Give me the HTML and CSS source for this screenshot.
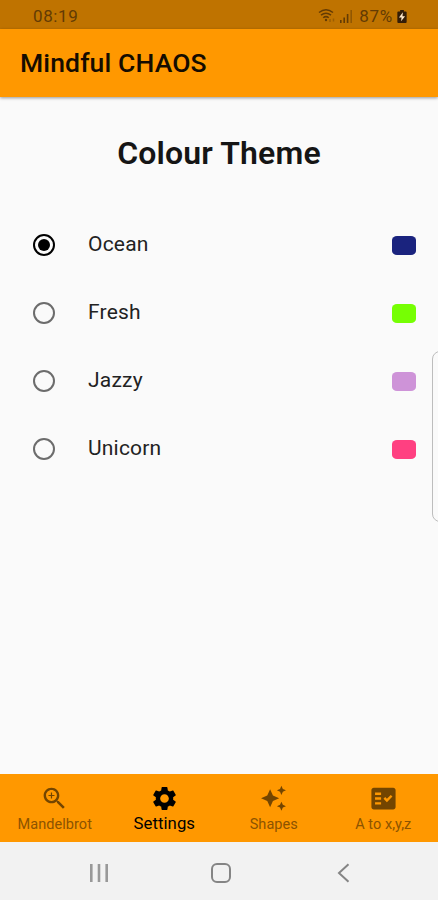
FILE: index.html
```html
<!DOCTYPE html>
<html lang="en">
<head>
<meta charset="utf-8">
<title>Mindful CHAOS</title>
<link rel="stylesheet" href="styles.css">
</head>
<body>
<header class="status">
  <span class="clock">08:19</span>
  <div class="status-right">
    <svg class="wifi" viewBox="0 0 19 16" fill="none" stroke="currentColor" stroke-width="1.5">
      <path d="M1 4.500Q8 -1 15 4.500M3 7.200Q8 3.200 13 7.200M5.200 9.800Q8 7.400 10.800 9.800"/>
      <circle cx="8" cy="12" r="1.200" fill="currentColor" stroke="none"/>
      <path d="M12 14v-3M15.500 10.500v3" opacity=".4"/>
    </svg>
    <svg class="signal" viewBox="0 0 13 14" fill="currentColor">
      <path d="M0 11h1.600v3H0zM3.400 8.500H5V14H3.400zM6.800 5h1.600v9H6.800z"/><path d="M10.400 1H12v13h-1.600z" opacity=".5"/>
    </svg>
    <span class="percent">87%</span>
    <svg class="battery" viewBox="0 0 10 14">
      <path fill="#331d08" d="M3 0h4v1.500h2q1 0 1 1V13q0 1-1 1H1q-1 0-1-1V2.500q0-1 1-1h2z"/>
      <path fill="#ffe9cc" d="M6 2.500L1.700 8H4.500L4 12 8.300 6.700H5.500z"/>
    </svg>
  </div>
</header>
<div class="appbar"><h1>Mindful CHAOS</h1></div>
<main>
  <h2>Colour Theme</h2>
  <ul class="themes">
    <li><span class="radio checked"></span><span class="name">Ocean</span><span class="swatch ocean"></span></li>
    <li><span class="radio"></span><span class="name">Fresh</span><span class="swatch fresh"></span></li>
    <li><span class="radio"></span><span class="name">Jazzy</span><span class="swatch jazzy"></span></li>
    <li><span class="radio"></span><span class="name">Unicorn</span><span class="swatch unicorn"></span></li>
  </ul>
  <div class="edge-handle"></div>
</main>
<nav class="tabs">
  <a class="tab">
    <svg viewBox="0 0 24 24"><path d="M15.500 14h-.79l-.28-.27C15.410 12.590 16 11.110 16 9.500 16 5.910 13.090 3 9.500 3S3 5.910 3 9.500 5.910 16 9.500 16c1.610 0 3.090-.59 4.230-1.570l.27.28v.79l5 4.990L20.490 19l-4.990-5zm-6 0C7.010 14 5 11.990 5 9.500S7.010 5 9.500 5 14 7.010 14 9.500 11.990 14 9.500 14zM12 10h-2v2H9v-2H7V9h2V7h1v2h2v1z"/></svg>
    <span>Mandelbrot</span>
  </a>
  <a class="tab active">
    <svg viewBox="0 0 24 24"><path d="M19.140 12.940c.04-.3.060-.61.060-.94 0-.32-.02-.64-.07-.94l2.030-1.580c.18-.14.23-.41.120-.61l-1.920-3.320c-.12-.22-.37-.29-.59-.22l-2.390.96c-.5-.38-1.030-.7-1.620-.94l-.36-2.540c-.04-.24-.24-.41-.48-.41h-3.840c-.24 0-.43.17-.47.41l-.36 2.540c-.59.24-1.130.57-1.620.94l-2.390-.96c-.22-.08-.47 0-.59.22L2.740 8.870c-.12.21-.08.47.12.61l2.030 1.580c-.05.3-.09.63-.09.94s.02.64.07.94l-2.030 1.580c-.18.14-.23.41-.12.61l1.920 3.320c.12.22.37.29.59.22l2.390-.96c.5.38 1.030.7 1.620.94l.36 2.540c.05.24.24.41.48.41h3.840c.24 0 .44-.17.47-.41l.36-2.540c.59-.24 1.130-.56 1.620-.94l2.390.96c.22.08.47 0 .59-.22l1.920-3.320c.12-.22.07-.47-.12-.61l-2.010-1.580zM12 15.600c-1.980 0-3.600-1.620-3.600-3.600s1.620-3.600 3.600-3.600 3.600 1.620 3.600 3.600-1.620 3.600-3.600 3.600z"/></svg>
    <span>Settings</span>
  </a>
  <a class="tab">
    <svg viewBox="-.8 -.6 25.600 25.600"><path d="M19 9l1.250-2.750L23 5l-2.750-1.250L19 1l-1.250 2.750L15 5l2.750 1.250L19 9zm-7.500.5L9 4 6.500 9.500 1 12l5.500 2.500L9 20l2.500-5.500L17 12l-5.500-2.500zM19 15l-1.250 2.750L15 19l2.750 1.250L19 23l1.250-2.750L23 19l-2.750-1.250L19 15z"/></svg>
    <span>Shapes</span>
  </a>
  <a class="tab">
    <svg viewBox="0 0 24 24"><path fill-rule="evenodd" d="M20 3H4c-1.100 0-2 .9-2 2v14c0 1.100.9 2 2 2h16c1.100 0 2-.9 2-2V5c0-1.100-.9-2-2-2zM10 17H5v-2h5v2zm0-4H5v-2h5v2zm0-4H5V7h5v2zm4.820 6L12 12.160l1.410-1.410 1.410 1.420L17.990 9l1.420 1.420L14.820 15z"/></svg>
    <span>A to x,y,z</span>
  </a>
</nav>
<footer class="sysnav">
  <svg class="recents" viewBox="0 0 20 20"><path d="M2.300 1v18M10 1v18M17.700 1v18"/></svg>
  <svg viewBox="0 0 20 20"><rect x="1" y="1" width="18" height="18" rx="5"/></svg>
  <svg viewBox="0 0 20 20"><path d="M14.500 1.200L5 10l9.500 8.800"/></svg>
</footer>
</body>
</html>
```

FILE: styles.css
```css
* { box-sizing: border-box; margin: 0; padding: 0; }
body {
  width: 438px;
  height: 900px;
  display: flex;
  flex-direction: column;
  overflow: hidden;
  background: #fafafa;
  color: #151515;
  font-family: Roboto, "Liberation Sans", sans-serif;
}
.status {
  height: 29px;
  display: flex;
  justify-content: space-between;
  align-items: center;
  padding: 3px 31px 0 33px;
  background: #bf7300;
  color: #633b04;
  font-size: 17px;
}
.clock { letter-spacing: 0.6px; }
.status-right { display: flex; align-items: center; }
.wifi { width: 19px; height: 16px; margin-right: 3px; }
.signal { width: 13px; height: 14px; margin-right: 6px; }
.percent { letter-spacing: 0.7px; }
.battery { width: 10px; height: 13px; margin-left: 4px; }
.appbar {
  height: 68px;
  display: flex;
  align-items: center;
  padding: 0 0 2px 20px;
  background: #ff9800;
  box-shadow: 0 1px 3px rgba(0, 0, 0, 0.4);
  color: #150c00;
}
.appbar h1 { font-size: 26.5px; font-weight: 500; letter-spacing: 0.13px; }
main { position: relative; flex: 1; }
h2 {
  padding-top: 37px;
  line-height: 38px;
  text-align: center;
  font-size: 32px;
  font-weight: 600;
  letter-spacing: 0.15px;
}
.themes { margin-top: 39px; list-style: none; }
.themes li {
  height: 68px;
  display: flex;
  align-items: center;
  padding: 0 22px 0 33px;
}
.radio {
  width: 22px;
  height: 22px;
  margin-right: 33px;
  display: grid;
  place-items: center;
  border: 2px solid #6c6c6c;
  border-radius: 50%;
}
.checked { border-color: #000; }
.checked::before { content: ""; width: 12px; height: 12px; border-radius: 50%; background: #000; }
.name { flex: 1; padding-bottom: 2px; font-size: 21px; letter-spacing: 0.2px; color: #222; }
.swatch { width: 24px; height: 19px; border-radius: 5px / 4px; }
.ocean { background: #1a237e; }
.fresh { background: #76ff03; }
.jazzy { background: #ce93d8; }
.unicorn { background: #ff4081; }
.edge-handle {
  position: absolute;
  top: 254px;
  right: -10px;
  width: 16px;
  height: 171px;
  border: 1.5px solid #bdbdbd;
  border-radius: 8px;
}
.tabs { height: 68px; display: grid; grid-template-columns: repeat(4, 1fr); background: #ff9800; }
.tab {
  display: flex;
  flex-direction: column;
  align-items: center;
  padding-top: 10px;
  color: #8c5300;
  font-size: 14.5px;
  line-height: 18px;
  letter-spacing: 0.05px;
}
.tab svg { width: 29px; height: 29px; fill: #734500; }
.tab span { padding-top: 3px; }
.active { color: #000; font-size: 16.75px; }
.active svg { fill: #000; }
.active span { padding-top: 1px; }
.sysnav {
  height: 58px;
  display: flex;
  justify-content: center;
  align-items: center;
  gap: 102.5px;
  padding: 3px 0 0 4px;
  background: #f2f2f2;
}
.sysnav svg { width: 20px; height: 20px; fill: none; stroke: #858585; stroke-width: 2; }
.sysnav .recents { stroke: #999; stroke-width: 2.6; }
```
